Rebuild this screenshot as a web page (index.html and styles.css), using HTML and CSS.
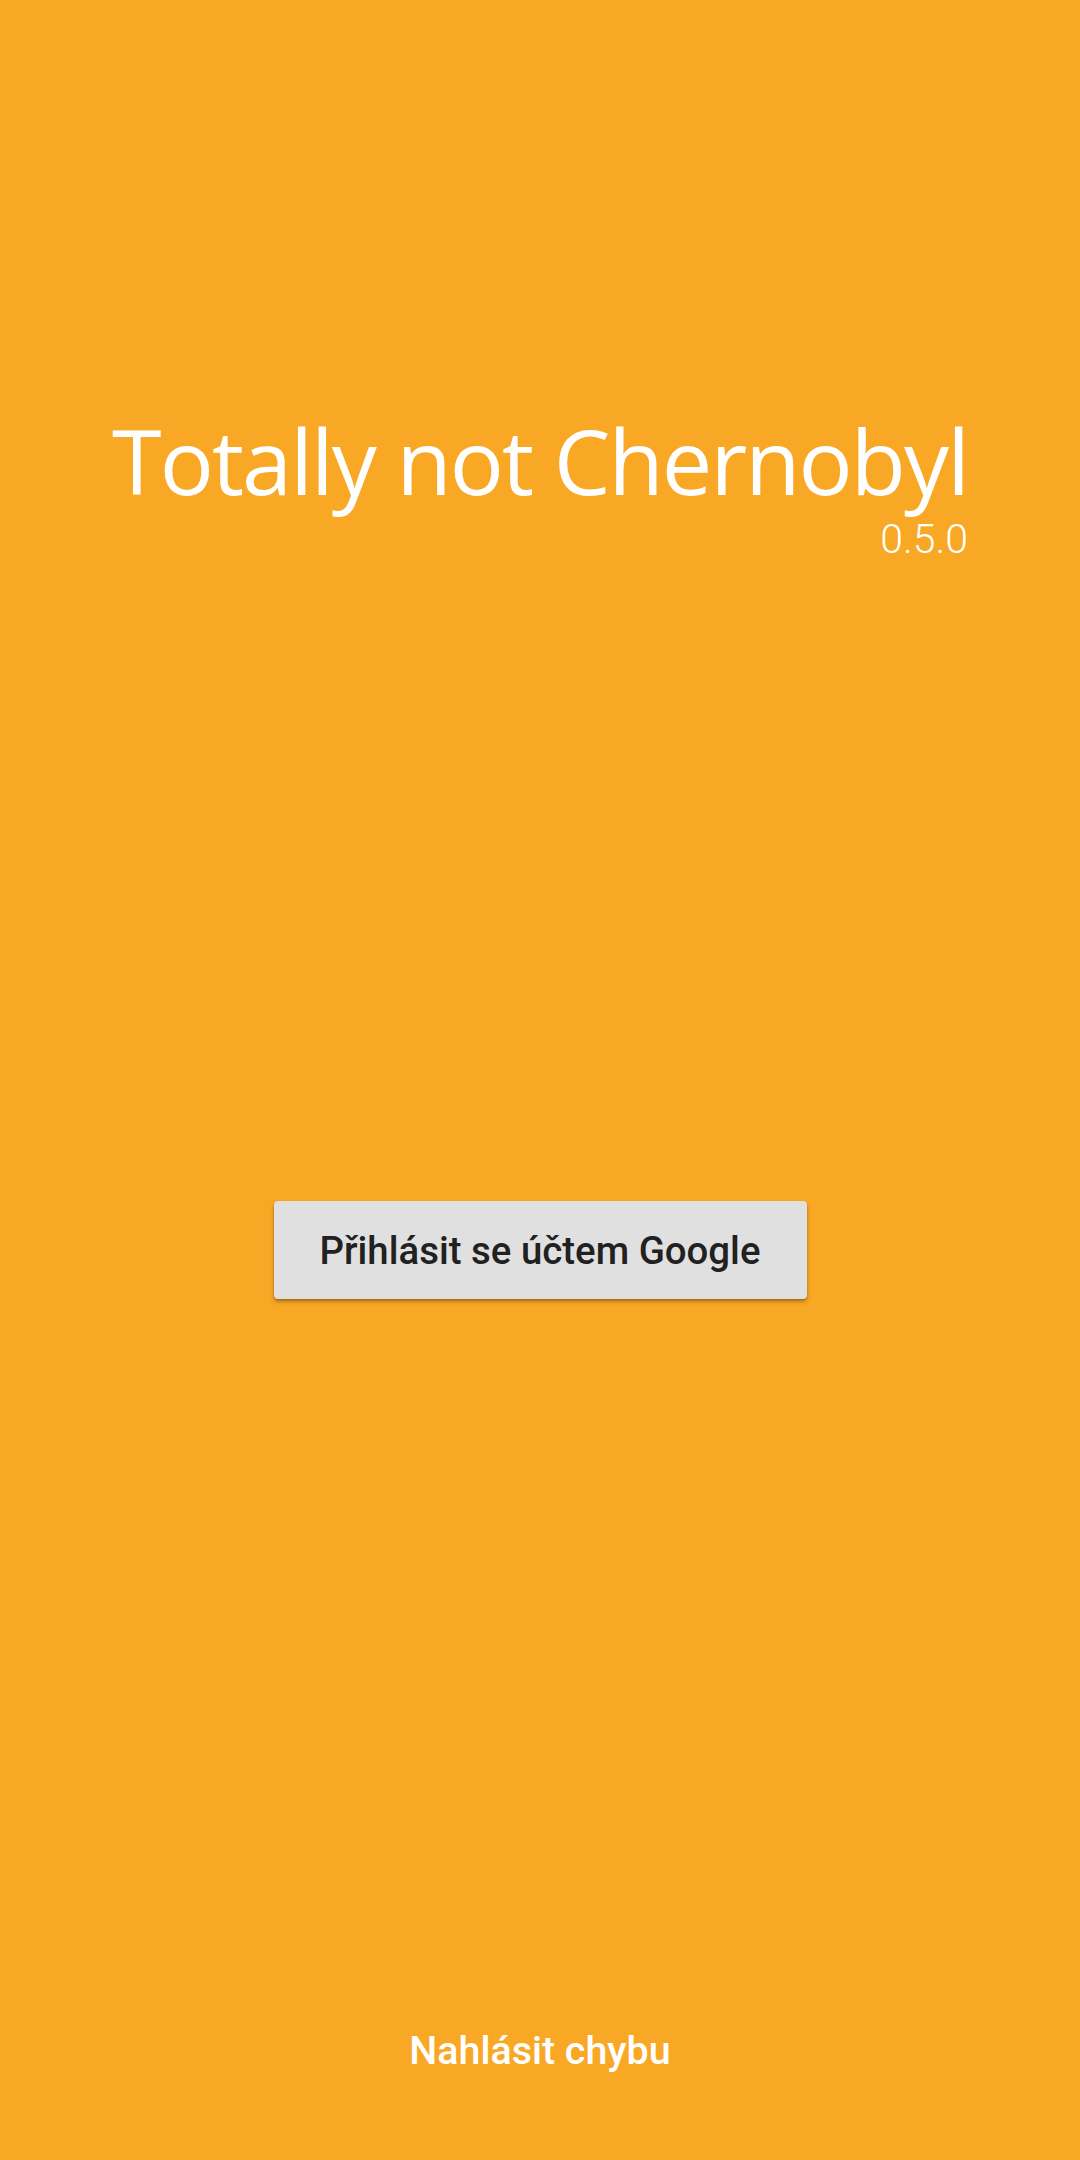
FILE: index.html
```html
<!DOCTYPE html>
<html>
<head>
<meta charset="utf-8">
<link rel="stylesheet" href="styles.css">
</head>
<body>
<div class="screen">
  <div class="header">
    <div class="title">Totally not Chernobyl</div>
    <div class="version">0.5.0</div>
  </div>
  <button class="login">Přihlásit se účtem Google</button>
  <div class="report">Nahlásit chybu</div>
</div>
</body>
</html>
```
FILE: styles.css
```css
html, body {
  margin: 0;
  padding: 0;
}
body {
  background: #F9A825;
}
.screen {
  width: 1080px;
  height: 2160px;
  display: flex;
  flex-direction: column;
  align-items: center;
  box-sizing: border-box;
  padding-top: 404px;
}
.header {
  display: flex;
  flex-direction: column;
  align-items: flex-end;
}
.title {
  font-family: "Open Sans", "Noto Sans", sans-serif;
  font-size: 90px;
  letter-spacing: -1.9px;
  line-height: 113px;
  color: #ffffff;
  white-space: nowrap;
}
.version {
  font-family: Roboto, sans-serif;
  font-weight: 300;
  font-size: 41px;
  line-height: 44px;
  color: #ffffff;
}
.login {
  margin-top: 640px;
  width: 533px;
  height: 98px;
  border: none;
  border-radius: 4px;
  background: #E0E0E0;
  color: #212121;
  font-family: Roboto, sans-serif;
  font-weight: 500;
  font-size: 38.4px;
  white-space: nowrap;
  box-shadow: 0 3px 4px rgba(0,0,0,0.25), 0 1px 2px rgba(0,0,0,0.2);
  padding: 0;
}
.report {
  margin-top: auto;
  margin-bottom: 82px;
  font-family: Roboto, sans-serif;
  font-weight: 500;
  font-size: 39.4px;
  line-height: 55px;
  color: #ffffff;
}
```
